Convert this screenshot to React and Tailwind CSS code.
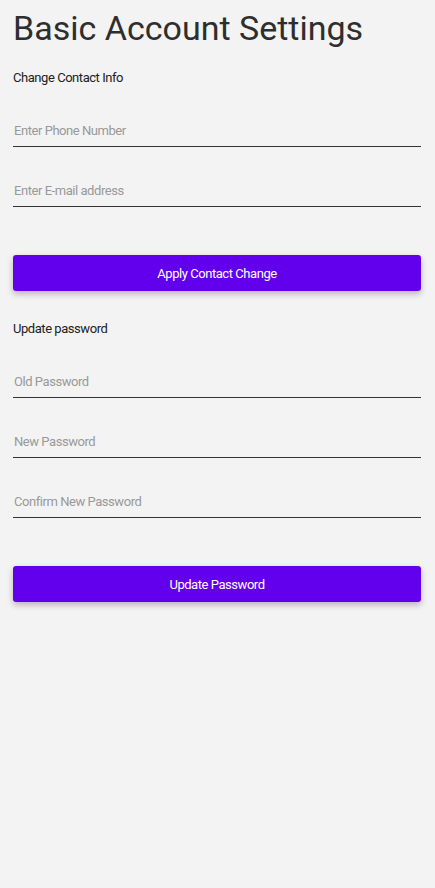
export default function App() {
  return (
    <div className="min-h-[888px] bg-[#f3f3f3] pl-[13px] pr-[14px] font-['Roboto',sans-serif] text-[#222]">
      {/* TITLE */}
      <h1 className="pt-[6px] text-[34px] leading-[44px] text-[#2e2e2e]">
        Basic Account Settings
      </h1>

      {/* CONTACT */}
      <p className="mt-[20px] text-[13px] leading-[16px] tracking-[-0.45px]">Change Contact Info</p>
      <input
        placeholder="Enter Phone Number"
        className="mt-[29px] block h-[32px] w-full border-b border-[#333] bg-transparent px-px text-[13px] tracking-[-0.45px] outline-none placeholder:text-[#999]"
      />
      <input
        placeholder="Enter E-mail address"
        className="mt-[28px] block h-[32px] w-full border-b border-[#333] bg-transparent px-px text-[13px] tracking-[-0.45px] outline-none placeholder:text-[#999]"
      />
      <button className="mt-[48px] block h-[36px] w-full rounded-[3px] bg-[#6200ee] pt-px text-[13px] tracking-[-0.45px] text-white shadow-[0_3px_6px_rgba(0,0,0,0.25)]">
        Apply Contact Change
      </button>

      {/* PASSWORD */}
      <p className="mt-[30px] text-[13px] leading-[16px] tracking-[-0.45px]">Update password</p>
      <input
        placeholder="Old Password"
        className="mt-[29px] block h-[32px] w-full border-b border-[#333] bg-transparent px-px text-[13px] tracking-[-0.45px] outline-none placeholder:text-[#999]"
      />
      <input
        placeholder="New Password"
        className="mt-[28px] block h-[32px] w-full border-b border-[#333] bg-transparent px-px text-[13px] tracking-[-0.45px] outline-none placeholder:text-[#999]"
      />
      <input
        placeholder="Confirm New Password"
        className="mt-[28px] block h-[32px] w-full border-b border-[#333] bg-transparent px-px text-[13px] tracking-[-0.45px] outline-none placeholder:text-[#999]"
      />
      <button className="mt-[48px] block h-[36px] w-full rounded-[3px] bg-[#6200ee] pt-px text-[13px] tracking-[-0.45px] text-white shadow-[0_3px_6px_rgba(0,0,0,0.25)]">
        Update Password
      </button>
    </div>
  )
}
